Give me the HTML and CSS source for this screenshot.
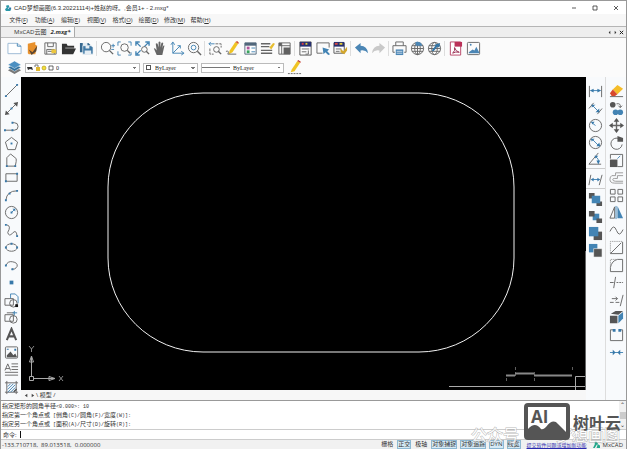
FILE: index.html
```html
<!DOCTYPE html>
<html lang="zh-CN">
<head>
<meta charset="utf-8">
<title>CAD梦想画图</title>
<link rel="stylesheet" href="styles.css">
</head>
<body>
<header class="titlebar">
  <svg class="app-logo" viewBox="0 0 8 8"><path d="M1 2L4 1 5 3 3 5 7 6 6 8H1L0 6 2 4Z" fill="#2a98a8"/><path d="M4 4h3v2H5z" fill="#3475ad"/></svg>
  <h1>CAD梦想画图(6.3.20221114)+姓赵的呀。,会员1+ - 2.mxg*</h1>
  <div class="window-controls">
    <button aria-label="最小化"><svg viewBox="0 0 8 8"><path d="M2 4h4"/></svg></button>
    <button aria-label="最大化"><svg viewBox="0 0 8 8"><path d="M2 2h4v4H2z"/></svg></button>
    <button aria-label="关闭"><svg viewBox="0 0 8 8"><path d="M2 2l4 4M6 2L2 6"/></svg></button>
  </div>
</header>
<nav class="menubar">
  <button>文件(<u>F</u>)</button><button>功能(<u>A</u>)</button><button>编辑(<u>E</u>)</button><button>视图(<u>V</u>)</button><button>格式(<u>O</u>)</button><button>绘图(<u>D</u>)</button><button>修改(<u>M</u>)</button><button>帮助(<u>H</u>)</button>
</nav>
<div class="tabs">
  <button class="tab">MxCAD云图</button><button class="tab tab-active">2.mxg*</button>
  <div class="tab-controls"><button aria-label="上一个"><svg viewBox="0 0 6 6"><path d="M4 1v4L2 3z"/></svg></button><button aria-label="下一个"><svg viewBox="0 0 6 6"><path d="M2 1v4l2-2z"/></svg></button><button aria-label="关闭标签"><svg viewBox="0 0 6 6"><path d="M1 1l4 4M5 1L1 5" stroke="#222" stroke-width="1.2"/></svg></button></div>
</div>
<div class="toolbar">
  <div class="group group-5">
    <button aria-label="新建"><svg viewBox="0 0 16 16"><path d="M1 2.500h10l4 3v8H1z" fill="#fff" stroke="#9bb9d4"/><path class="b" d="M11 2.500v3h4"/></svg></button>
    <button aria-label="打开云图"><svg viewBox="0 0 16 16"><path d="M3 3l8-2v3l2 1-2 9H4l-1-1z" fill="#e8912d"/><path d="M4 9l4 3 5-7-1 6-5 4z" fill="#5a4632"/></svg></button>
    <button aria-label="云图保存"><svg viewBox="0 0 16 16"><path class="g" d="M2 2h12v12H2zM5 2v4h6V2M4 14V9h8v5M5 11h5"/><path d="M9 9h5v4H9z" fill="#ecc63e"/></svg></button>
    <button aria-label="打开"><svg viewBox="0 0 16 16"><path d="M1 3h5l1 2h7v3H4l-3 6zM4 8h12l-3 6H1z" fill="#333"/><path d="M4.500 7.500H14" stroke="#aaa"/></svg></button>
    <button aria-label="保存"><svg viewBox="0 0 16 16"><path d="M1 2h9l2 2v8H1z" fill="#36688f"/><path d="M4 2h5v4H4z" fill="#e6eef4"/><path d="M4 5h9l2 2v7H4z" fill="#4079a5" stroke="#fff" stroke-width=".7"/><path d="M7 5h4v3H7zM6 10h7v4H6z" fill="#e6eef4"/></svg></button>
  </div>
  <div class="group group-6">
    <button aria-label="缩放"><svg viewBox="0 0 16 16"><circle class="g" cx="6.500" cy="6.500" r="5"/><path class="g w" d="M10 10l4 4"/><path class="b" d="M12 5h4M14 3v4M12 9h3"/></svg></button>
    <button aria-label="窗口缩放"><svg viewBox="0 0 16 16"><path class="b" d="M1 5V1h3M12 1h3v4M1 11v4h3M12 15h3v-3"/><circle class="g" cx="8" cy="7" r="4"/><path class="g w" d="M11 10l3 3"/></svg></button>
    <button aria-label="范围缩放"><svg viewBox="0 0 16 16"><path class="b w" d="M2 2l4 4M14 2l-4 4M2 14l4-4M1 5V1h4M11 1h4v4M1 11v4h4"/><circle class="g" cx="10" cy="9" r="3"/><path class="g w" d="M12 11l3 3"/></svg></button>
    <button aria-label="平移"><svg viewBox="0 0 16 16"><path d="M5 15L2 8q1-1 3 2L4 3q1-1 2 0l1 4V1q1-1 2 0v6l1-5q1-1 2 0l-1 6 1-3q2-1 1 1l-2 9z" fill="#666"/></svg></button>
    <button aria-label="坐标系"><svg viewBox="0 0 16 16"><path class="b" d="M3 2v11h11M1 4l2-3 2 3M12 11l3 2-3 2M3 13l8-8M8 5h3v3"/></svg></button>
    <button aria-label="实时缩放"><svg viewBox="0 0 16 16"><circle class="g" cx="7" cy="7" r="5.500"/><circle class="b" cx="7" cy="7" r="2.500"/><path class="g w" d="M11 11l4 4"/></svg></button>
  </div>
  <div class="group group-5 narrow">
    <button aria-label="缩放上一个"><svg viewBox="0 0 16 16"><path class="g" stroke-dasharray="3 1" d="M8 3h6v4M2 8v6h4"/><path class="b" d="M1 3h6M3 1L1 3l2 2"/><circle class="g" cx="9" cy="9" r="3"/><path class="g w" d="M11 11l3 3"/></svg></button>
    <button aria-label="编辑"><svg viewBox="0 0 16 16"><path d="M5 10l6-9 3 2-6 9-4 2z" fill="#f0c424"/><path d="M11 1l2-1 2 2-1 1z" fill="#d25230"/><path class="g" d="M1 11q4-1 2 3h9"/></svg></button>
    <button aria-label="图层"><svg viewBox="0 0 16 16"><path d="M2 2h12v12H2z" fill="#fff" stroke="#51677b"/><path d="M2 2h12v3H2z" fill="#51677b"/><path d="M4 6h3v3H4z" fill="#b3559c"/><path d="M4 10h3v3H4z" fill="#37a35c"/><path class="b" d="M9 7.500h4M9 11.500h4"/></svg></button>
    <button aria-label="线型"><svg viewBox="0 0 16 16"><path class="g w" d="M1 3h10M1 6h9M1 10h12M1 13h12"/><path d="M10 7l4-5 2 1-4 6z" fill="#e6bd30"/></svg></button>
    <button aria-label="外部参照"><svg viewBox="0 0 16 16"><path class="g" d="M2 2h12v12H2zM5 2v12M2 5h12"/><path d="M2 2h3v3H2zM7 7h7v7H7z" fill="#606060"/></svg></button>
  </div>
  <div class="group group-3">
    <button aria-label="颜色"><svg viewBox="0 0 16 16"><path d="M2 1h12v14H2z" fill="#fff" stroke="#555"/><path d="M2 1h12v5H2z" fill="#273171"/><path d="M4 2h2v2H4z" fill="#de3d44"/><path d="M8 2h2v2H8z" fill="#e5cd36"/><path class="g" d="M4 8.500h8M4 11.500h5M11 10v4H8"/></svg></button>
    <button aria-label="选择"><svg viewBox="0 0 16 16"><path class="g" d="M14 7V2H1v11h6"/><path d="M7 7l7 2-2 2 3 3-2 1-3-3-2 2z" fill="#4384b4"/></svg></button>
    <button aria-label="颜色设置"><svg viewBox="0 0 16 16"><path d="M1 2h11v11H1z" fill="#fff" stroke="#555"/><path d="M1 1h11v5H1z" fill="#273171"/><path d="M2 2h3v2H2z" fill="#d94943"/><path d="M7 2h3v2H7z" fill="#e5cd36"/><path class="g" d="M3 8.500h6M3 11h4"/><path d="M8 8l3 3 4-5v4l-3 4-4-2z" fill="#d2a62d"/></svg></button>
  </div>
  <div class="group group-2">
    <button aria-label="撤销"><svg viewBox="0 0 16 16"><path d="M1 7l6-5v3q7 0 8 8-3-4-8-3v3z" fill="#4b86b5"/></svg></button>
    <button aria-label="重做"><svg viewBox="0 0 16 16"><path d="M15 7L9 2v3q-7 0-8 8 3-4 8-3v3z" fill="#c9c9c9"/></svg></button>
  </div>
  <div class="group group-3">
    <button aria-label="打印"><svg viewBox="0 0 16 16"><path class="g" d="M4 5V1h8v4M3 12H1V5h14v7h-2"/><path d="M4 9h8v6H4z" fill="#4b86b5"/><path d="M5 11h6M5 13h6" stroke="#fff" stroke-width=".7"/></svg></button>
    <button aria-label="网络"><svg viewBox="0 0 16 16"><circle class="g" cx="8" cy="8" r="6.500"/><ellipse class="g" cx="8" cy="8" rx="3" ry="6.500"/><path class="g" d="M2 5h12M1.500 8h13M2 11h12M8 1v14"/><path d="M6 1q6-1 7 4H6z" fill="#4b86b5"/></svg></button>
    <button aria-label="网络发布"><svg viewBox="0 0 16 16"><circle class="g" cx="8" cy="8" r="6.500"/><ellipse class="g" cx="8" cy="8" rx="3" ry="6.500"/><path class="g" d="M2 5h12M1.500 8h13M2 11h12"/><path d="M14 2L8 4l1 1-4 5 2 1 4-5 2 1z" fill="#3475a5"/></svg></button>
  </div>
  <div class="group group-2 last">
    <button aria-label="PDF"><svg viewBox="0 0 16 16"><path d="M2.500 1h11v14h-11z" fill="#fff" stroke="#b84467"/><path d="M7 1h8v5H7z" fill="#bb3158"/><path d="M5 13q3-3 2-6 1 4 5 5-4-1-7 1" fill="none" stroke="#982c50"/></svg></button>
    <button aria-label="图片"><svg viewBox="0 0 16 16"><rect class="g" x="1.500" y="1.500" width="13" height="13" rx="1"/><path d="M3 12l4-3 2 1 2-4 3 6v1H3z" fill="#4b86b5"/><circle cx="5" cy="4" r="1" fill="#4b86b5"/></svg></button>
  </div>
</div>
<div class="toolbar properties">
  <button class="layers" aria-label="图层管理"><svg viewBox="0 0 16 16"><path d="M8 7l7 4-7 4-7-4z" fill="#777"/><path d="M8 4l7 4-7 4-7-4z" fill="#31719e" stroke="#fff" stroke-width=".5"/><path d="M8 1l7 4-7 4-7-4z" fill="#4b8fc1" stroke="#fff" stroke-width=".5"/></svg></button>
  <div class="field field-layer">
    <svg class="layer-state" viewBox="0 0 28 8"><path d="M1 3h5l1 3-3-1-2 1z" fill="#333"/><path d="M9 3V1h3v5" fill="none" stroke="#777"/><path d="M10 3h4v4h-4z" fill="#e0b731"/><circle cx="18" cy="4" r="2" fill="#f3df35" stroke="#b49c23" stroke-width=".7"/><path d="M23 2h4v4h-4z" fill="#fff" stroke="#444" stroke-width=".8"/></svg>
    <select aria-label="当前图层"><option>0</option></select>
  </div>
  <div class="field field-color"><span class="swatch"></span><select aria-label="颜色"><option>ByLayer</option></select></div>
  <div class="field field-line"><span class="line-sample"></span><select aria-label="线型"><option>ByLayer</option></select></div>
  <button aria-label="特性匹配"><svg viewBox="0 0 16 16"><path d="M5 10l6-9 3 2-6 9-4 1z" fill="#f0c424"/><path d="M11 1l1-1 3 2-1 1z" fill="#c43b2f"/><path class="g" stroke-dasharray="2 1" d="M1 14.500h14"/></svg></button>
</div>
<main class="workspace">
  <aside class="tools">
    <button aria-label="直线"><svg viewBox="0 0 16 16"><path class="g" d="M2 14L14 2"/><path class="p" d="M1 13h2v2H1zM13 1h2v2h-2z"/></svg></button>
    <button aria-label="构造线"><svg viewBox="0 0 16 16"><path class="g" d="M2 14L14 2"/><path class="k" d="M1 15l1-5 4 4zM15 1l-5 1 4 4z"/><path class="p" d="M7 7h2v2H7z"/></svg></button>
    <button aria-label="多段线"><svg viewBox="0 0 16 16"><path class="g" d="M1 13h10a4 4 0 000-8H9"/><path class="p" d="M0 12h2v2H0zM8 12h2v2H8zM8 4h2v2H8z"/></svg></button>
    <button aria-label="正多边形"><svg viewBox="0 0 16 16"><path class="g" d="M8 1.500l6.500 5-2.500 8H4l-2.500-8z"/><path class="p" d="M7 7h2v2H7z"/></svg></button>
    <button aria-label="多边形"><svg viewBox="0 0 16 16"><path class="g" d="M3 14V5l4-4 6 5v3l-1 5z"/><path class="p" d="M2 13h2v2H2zM11 13h2v2h-2z"/></svg></button>
    <button aria-label="矩形"><svg viewBox="0 0 16 16"><path class="g" d="M2 4h12v8H2z"/><path class="p" d="M1 11h2v2H1zM13 3h2v2h-2z"/></svg></button>
    <button aria-label="圆弧"><svg viewBox="0 0 16 16"><path class="g" d="M2 13Q3 3 14 3"/><path class="p" d="M1 12h2v2H1zM5 5h2v2H5zM13 2h2v2h-2z"/></svg></button>
    <button aria-label="圆"><svg viewBox="0 0 16 16"><circle class="g" cx="8" cy="8" r="6.500"/><path class="b" d="M8 8l4-4"/><path class="p" d="M7 7h2v2H7zM9 4h3v3z"/></svg></button>
    <button aria-label="样条曲线"><svg viewBox="0 0 16 16"><path class="g" d="M3 2q5 1 1 8 1 5 5 1 4-5 5 3"/><path class="p" d="M1 1h2v2H1zM13 13h2v2h-2z"/></svg></button>
    <button aria-label="椭圆"><svg viewBox="0 0 16 16"><ellipse class="g" cx="8" cy="8" rx="6" ry="4"/><path class="p" d="M1 7h2v2H1zM13 7h2v2h-2zM7 3h2v2H7z"/></svg></button>
    <button aria-label="椭圆弧"><svg viewBox="0 0 16 16"><path class="g" d="M2 8q2-5 7-4 6 1 5 5-2 4-6 3"/><path class="p" d="M1 7h2v2H1zM8 11h2v2H8z"/></svg></button>
    <button aria-label="点"><svg viewBox="0 0 16 16"><path class="p" d="M6 6h4v4H6z"/></svg></button>
    <button aria-label="插入块"><svg viewBox="0 0 16 16"><path class="b" d="M7 6V1h5l3 3v7"/><path class="g" d="M1 6h9v7H1z"/><circle class="g" cx="10" cy="11" r="4"/><path d="M12 12h3v3h-3z" fill="#111"/></svg></button>
    <button aria-label="创建块"><svg viewBox="0 0 16 16"><path class="g" d="M1 5h9v7H1zM3 3h8"/><path class="b" d="M11 1v5M9 3h5"/><circle class="g" cx="10" cy="10" r="4"/></svg></button>
    <button aria-label="单行文字"><svg viewBox="0 0 16 16"><path d="M3 14L8 2l5 12M5 10h6" fill="none" stroke="#555" stroke-width="2.200"/></svg></button>
    <button aria-label="图像"><svg viewBox="0 0 16 16"><rect class="g" x="1.500" y="2" width="13" height="12" rx="1"/><path class="k" d="M3 13V11l4-4 3 4 2-2 2 4z"/><path class="p" d="M11 4h2v2h-2zM3 4h2v1H3z"/></svg></button>
    <button aria-label="多行文字"><svg viewBox="0 0 16 16"><path class="g" d="M1 9l3-7 3 7M2 7h4M8 2h7M8 5h7M8 8h7M1 11h14M1 14h14"/></svg></button>
    <button aria-label="填充"><svg viewBox="0 0 16 16"><path class="g" d="M1 3h14M1 13h14M3 1v14M13 1v14"/><path class="b" d="M4 7l3-3M4 10l6-6M4 13l8-8M7 13l5-5M10 13l3-3"/><path class="k" d="M10 12l3-3 1 1-3 3z"/></svg></button>
  </aside>
  <section class="document">
    <div class="canvas">
      <svg viewBox="0 0 565 313" preserveAspectRatio="xMidYMid meet" aria-label="圆角矩形">
        <rect x="87" y="16" width="406" height="259" rx="95" ry="94" stroke="#f0f0f0" stroke-width="1"/>
        <g stroke="#aaa"><path d="M8.500 299.500h4v4h-4zM10.500 299v-19M13 301.500h20M8.500 285l2-6 2 6zM28 299.500l6 2-6 2z"/><path d="M8 269l2.500 3 2.500-3M10.500 272v3M38 299l4 5M42 299l-4 5" stroke-width=".8"/></g>
        <g stroke="#888"><path d="M428 309.500h137M554.500 313v-13.500H565" stroke="#aaa"/><path d="M485 298.500h9M494 296.500h19M513 298.500h38" stroke-width="2"/><path d="M494.500 290v3M551.500 290v3M485.500 301v3M513.500 301v3M494.500 295v4M513.500 295v4" stroke-width=".7"/><path d="M564.500 174v139" stroke="#666"/></g>
      </svg>
    </div>
    <div class="model-tabs"><button aria-label="前一布局"><svg viewBox="0 0 6 6"><path d="M4 1v4L1 3z"/></svg></button><button aria-label="后一布局"><svg viewBox="0 0 6 6"><path d="M2 1v4l3-2z"/></svg></button><button class="model">\ 模型 /</button></div>
  </section>
  <aside class="tools dimensions">
    <button aria-label="线性标注"><svg viewBox="0 0 16 16"><path class="g" d="M1.500 2v12M14.500 2v12"/><path class="b" d="M3 7h10"/><path class="p" d="M2 7l4-2v4zM14 7l-4-2v4z"/></svg></button>
    <button aria-label="对齐标注"><svg viewBox="0 0 16 16"><path class="g" d="M1 8l5-6M10 14l5-6"/><path class="b" d="M4 4l8 8"/><path class="p" d="M4 4h4L4 7zM12 12H8l4-4z"/></svg></button>
    <button aria-label="半径标注"><svg viewBox="0 0 16 16"><circle class="g" cx="8" cy="8" r="6.500"/><path class="b" d="M8 8L4 5"/><path class="p" d="M3 4h4L5 7z"/></svg></button>
    <button aria-label="直径标注"><svg viewBox="0 0 16 16"><circle class="g" cx="8" cy="8" r="6.500"/><path class="b" d="M4 4l8 8"/><path class="p" d="M3 4h4L4 7zM13 12H9l3-4z"/></svg></button>
    <button aria-label="角度标注"><svg viewBox="0 0 16 16"><path class="g" d="M11 1L1 13h13"/><path class="b" d="M8 5q4 2 3 7"/><path class="p" d="M7 4h4L8 7zM9 9h4l-2 4z"/></svg></button>
    <button class="divided" aria-label="标注编辑"><svg viewBox="0 0 16 16"><path class="g" d="M3 3L1 14M15 3l-3 11"/><path class="b" d="M4 8h8"/><path class="p" d="M3 8l3-2v4zM13 8l-3-2v4z"/></svg></button>
    <button class="divided" aria-label="前置"><svg viewBox="0 0 16 16"><path class="k" d="M1 1h6v6H1zM9 10h6v5H9z"/><path class="q" d="M4 4h9v8H4z"/></svg></button>
    <button aria-label="后置"><svg viewBox="0 0 16 16"><path class="q" d="M5 5h7v7H5z"/><path class="k" d="M1 2h6v6H1zM9 10h6v5H9z"/></svg></button>
    <button aria-label="置于对象之上"><svg viewBox="0 0 16 16"><path class="k" d="M6 6h9v9H6z"/><path class="q" d="M1 1h10v10H1z"/></svg></button>
    <button aria-label="置于对象之下"><svg viewBox="0 0 16 16"><path class="q" d="M1 1h9v9H1z"/><path class="k" d="M6 6h9v9H6z" stroke="#fff" stroke-width=".6"/></svg></button>
  </aside>
  <aside class="tools modify">
    <button aria-label="删除"><svg viewBox="0 0 16 16"><path d="M4 7l5-5 6 4-6 6z" fill="#f5bd29"/><path d="M4 7l5 5-3 2H3l-2-3z" fill="#d7482d"/><path class="g" d="M1 14.500h14"/></svg></button>
    <button aria-label="复制"><svg viewBox="0 0 16 16"><circle class="k" cx="4" cy="4" r="3"/><circle class="q" cx="7" cy="12" r="3"/><circle class="q" cx="12" cy="12" r="3"/><path class="g" d="M8 3q5-1 4 4M10 5l2 2 2-2"/></svg></button>
    <button aria-label="移动"><svg viewBox="0 0 16 16"><path class="g w" d="M8 2v12M2 8h12"/><path class="k" d="M8 0l3 4H5zM8 16l-3-4h6zM0 8l4-3v6zM16 8l-4 3V5z"/></svg></button>
    <button aria-label="旋转"><svg viewBox="0 0 16 16"><path class="g" d="M11 3a6 6 0 103 6"/><path class="k" d="M9 0l6 2v4H9z"/></svg></button>
    <button aria-label="缩放对象"><svg viewBox="0 0 16 16"><path class="g" d="M1.500 6V1.500h13v13H9"/><path class="k" d="M1 7h8v8H1z"/><path class="b" d="M9 6l3-3"/></svg></button>
    <button aria-label="偏移"><svg viewBox="0 0 16 16"><path d="M15 3H7v3H3q-2 1-2 4 0 4 5 4h9M15 6H9v3H6q-2 0-2 1 0 2 3 2h8" fill="none" stroke="#999"/></svg></button>
    <button aria-label="阵列"><svg viewBox="0 0 16 16"><path class="g" d="M1.500 1.500h5v5h-5zM9.500 1.500h5v5h-5zM1.500 9.500h5v5h-5zM9.500 9.500h5v5h-5z"/></svg></button>
    <button aria-label="镜像"><svg viewBox="0 0 16 16"><path class="g" d="M6 2v12H1z"/><path class="q" d="M9 1v13h6z"/><path class="b" d="M7.500 1v14"/></svg></button>
    <button aria-label="样条编辑"><svg viewBox="0 0 16 16"><path class="g" d="M1 9q4-9 7-1t7-1"/></svg></button>
    <button aria-label="倒角"><svg viewBox="0 0 16 16"><path class="g" d="M14.500 2v12.500h-13L13 3"/><path d="M1.500 14V1.500H14" fill="none" stroke="#888" stroke-dasharray="1 1"/></svg></button>
    <button aria-label="圆角"><svg viewBox="0 0 16 16"><path class="g" d="M1.500 10v4.500h13v-13H9Q3 3 1.500 10"/><path d="M1.500 9V1.500H8" fill="none" stroke="#888" stroke-dasharray="1 1"/></svg></button>
    <button aria-label="修剪"><svg viewBox="0 0 16 16"><path class="g" d="M7 2L5 14M1 8h4"/><path class="g" stroke-dasharray="2 1" d="M8 8h7"/></svg></button>
    <button aria-label="延伸"><svg viewBox="0 0 16 16"><path class="g" d="M15 2l-3 12M1 10h4M7 10h4M3 6h6M7 4l2 2-2 2"/></svg></button>
    <button aria-label="分解"><svg viewBox="0 0 16 16"><path class="k" d="M1 6h8v8H1zM2 4l5-3h8l-5 4z"/><path class="q" d="M10 6l5-4v7l-5 5z"/></svg></button>
    <button aria-label="打断"><svg viewBox="0 0 16 16"><path class="g" d="M5 3H1.500v11.500h13V3H11"/><path class="p" d="M4 2h3v3H4zM10 2h3v3h-3z"/></svg></button>
    <button aria-label="合并"><svg viewBox="0 0 16 16"><path class="b" d="M1 8h14"/><path class="p" d="M4 5l3 3-3 3zM12 5L9 8l3 3z"/></svg></button>
  </aside>
</main>
<section class="command">
  <div class="history">
    <p>指定矩形的圆角半径<code>&lt;0.000&gt;: 10</code></p>
    <p>指定第一个角点或<code> [</code>倒角<code>(C)/</code>圆角<code>(F)/</code>宽度<code>(W)]:</code></p>
    <p>指定另一个角点或<code> [</code>面积<code>(A)/</code>尺寸<code>(D)/</code>旋转<code>(R)]:</code></p>
    <div class="scroll"><span>⌃</span><i></i><span>⌄</span></div>
  </div>
  <div class="prompt"><label for="cmd">命令:</label><span class="caret"></span><input id="cmd"></div>
</section>
<div class="watermark"><span>公众号</span><span>梦想画图</span></div>
<footer class="status">
  <span class="coords">-133.710718,&nbsp; 89.013518,&nbsp; 0.000000</span>
  <button>栅格</button><button class="on">正交</button><button>极轴</button><button class="on">对象捕捉</button><button class="on">对象追踪</button><button class="on">DYN</button><button class="on">线宽</button>
  <a href="#">提交软件问题或增加新功能</a>
  <svg class="brand-logo" viewBox="0 0 8 8"><path d="M2 0h2l1 3-3 5H0l2-4zM5 1l1 3 2 1v3H4l1-3z" fill="#22a78a"/></svg><span class="brand">MxCAD</span>
</footer>
<div class="stamp"><svg viewBox="0 0 46 37"><rect x="2" y="2" width="42" height="33" rx="2" fill="#fff" stroke="#555" stroke-width="4"/><path d="M4 26q7-8 13 0 2 1 5-2 7-9 12-3l8 8v4H4z" fill="#555"/><text x="7" y="20">AI</text></svg><strong>树叶云</strong></div>
</body>
</html>
```
FILE: styles.css
```css
* { box-sizing: border-box; }
body {
  margin: 0;
  height: 100vh;
  display: flex;
  flex-direction: column;
  overflow: hidden;
  border: 1px solid #999;
  border-bottom: 0;
  background: #f7f7f7;
  color: #333;
  font: 6px/8px "Open Sans", "Noto Sans CJK SC", sans-serif;
}
button, input, select { margin: 0; padding: 0; border: 0; background: none; color: inherit; font: inherit; }
button { flex: none; }
svg { display: block; }
h1, p { margin: 0; font-weight: 400; }

.titlebar { display: flex; align-items: center; height: 13px; padding-left: 4px; gap: 2px; background: #fff; }
.titlebar h1 { flex: 1; font: 6px/8px "Liberation Sans", "Noto Sans CJK SC", sans-serif; }
.app-logo { width: 7px; height: 7px; }
.window-controls { display: flex; gap: 13px; padding-right: 6px; }
.window-controls svg { width: 8px; height: 8px; fill: none; stroke: #333; stroke-width: .8; }

.menubar { display: flex; height: 13px; padding-left: 7px; gap: 5px; border-bottom: 1px solid #b5b5b5; }
.menubar button { width: 21px; white-space: nowrap; }

.tabs { display: flex; align-items: center; height: 11px; padding-left: 13px; gap: 4px; background: #eee; border-bottom: 1px solid #bbb; }
.tab-active { align-self: stretch; padding-right: 3px; border-right: 1px solid #aaa; background: #fafafa; font-weight: 700; font-style: italic; }
.tab-controls { display: flex; gap: 1px; margin-left: auto; padding-right: 2px; }
.tab-controls svg { width: 5px; height: 5px; fill: #333; }

.toolbar { display: flex; align-items: center; height: 20px; padding-left: 6px; background: #fbfbfb; }
.toolbar svg, .tools svg { width: 15px; height: 15px; }
.group { display: flex; justify-content: space-between; margin-right: 3px; padding-right: 2px; border-right: 1px solid #ddd; }
.group-6 { width: 105px; }
.group-5 { width: 90px; }
.narrow { width: 87px; }
.group-3 { width: 53px; }
.group-2 { width: 35px; }
.last { border: 0; }
.g { fill: none; stroke: #666; }
.b { fill: none; stroke: #4384b4; }
.w { stroke-width: 1.5; }
.p { fill: #3778a9; }
.q { fill: #4384b4; }
.k { fill: #555; }

.properties { height: 19px; gap: 3px; }
.field { display: flex; align-items: center; height: 10px; border: 1px solid #bbb; background: #fff; }
.field select {
  flex: 1;
  min-width: 0;
  height: 8px;
  appearance: none;
  font: 6px/8px "Liberation Serif", serif;
  color: #222;
  background: linear-gradient(45deg, transparent 50%, #777 50%) right 4px center / 2px 2px no-repeat, linear-gradient(-45deg, transparent 50%, #777 50%) right 2px center / 2px 2px no-repeat;
}
.field-layer { width: 115px; }
.field-color { width: 55px; }
.field-line { width: 83px; }
.toolbar .layer-state { width: 28px; height: 8px; margin-right: 2px; }
.swatch { width: 5px; height: 5px; margin: 0 4px 0 2px; border: 1px solid #555; }
.line-sample { width: 28px; height: 1px; margin-right: 3px; background: #777; }

.workspace { flex: 1; min-height: 0; display: flex; }
.tools { display: grid; grid-template-rows: repeat(18, 1fr); width: 20px; flex: none; padding: 5px 0 4px; background: #f8fafc; }
.tools button { display: grid; place-items: center; }
.dimensions { display: flex; flex-direction: column; gap: 1px; padding-top: 6px; border-right: 1px solid #ddd; }
.dimensions button { height: 16px; }
.dimensions .divided { height: 19px; padding-top: 2px; border-top: 1px solid #ccc; }
.document { flex: 1; min-width: 0; display: flex; flex-direction: column; }
.canvas { flex: 1; min-height: 0; background: #000; }
.canvas svg { width: 100%; height: 100%; fill: none; }
.model-tabs { display: flex; align-items: center; height: 10px; padding-left: 3px; gap: 1px; background: #f7f7f7; }
.model-tabs svg { width: 5px; height: 5px; fill: #444; }

.command { border-top: 1px solid #999; background: #fff; }
.history { position: relative; height: 28px; padding: 1px; }
.history p { white-space: pre; }
.command code { font: 5px/8px "Liberation Mono", monospace; white-space: pre; }
.scroll { position: absolute; top: 0; right: 0; bottom: 0; display: flex; flex-direction: column; justify-content: space-between; align-items: center; width: 7px; background: #f1f1f1; }
.scroll i { width: 6px; height: 7px; background: #ccc; }
.prompt { display: flex; align-items: center; height: 10px; padding-left: 2px; border-top: 1px solid #ccc; }
.prompt label { width: 17px; }
.prompt input { flex: 1; height: 8px; outline: 0; }
.caret { width: 1px; height: 7px; background: #111; }

.status { display: flex; align-items: center; height: 10px; padding: 0 3px 0 1px; gap: 3px; background: #f1f1f1; white-space: nowrap; border-top: 1px solid #ccc; }
.coords { flex: 1; }
.status button { line-height: 7px; border: 1px solid transparent; }
.status .on { border-color: #8eb9d3; background: #d5eaf6; }
.status a { margin-left: 3px; color: #2929ad; font-size: 5px; }
.brand-logo { width: 7px; height: 7px; margin-left: 3px; }

.watermark { position: absolute; right: 7px; bottom: 6px; display: flex; gap: 37px; font-size: 16px; line-height: 16px; color: #fff; -webkit-text-stroke: 1px #aaa; paint-order: stroke fill; opacity: .8; }
.stamp { position: absolute; right: 6px; bottom: 9px; display: flex; align-items: center; gap: 3px; color: #555; }
.stamp svg { width: 46px; height: 37px; }
.stamp text { font: 700 17px "Open Sans", sans-serif; fill: #555; }
.stamp strong { font: 700 16px/20px "Noto Sans CJK SC", sans-serif; }
```
